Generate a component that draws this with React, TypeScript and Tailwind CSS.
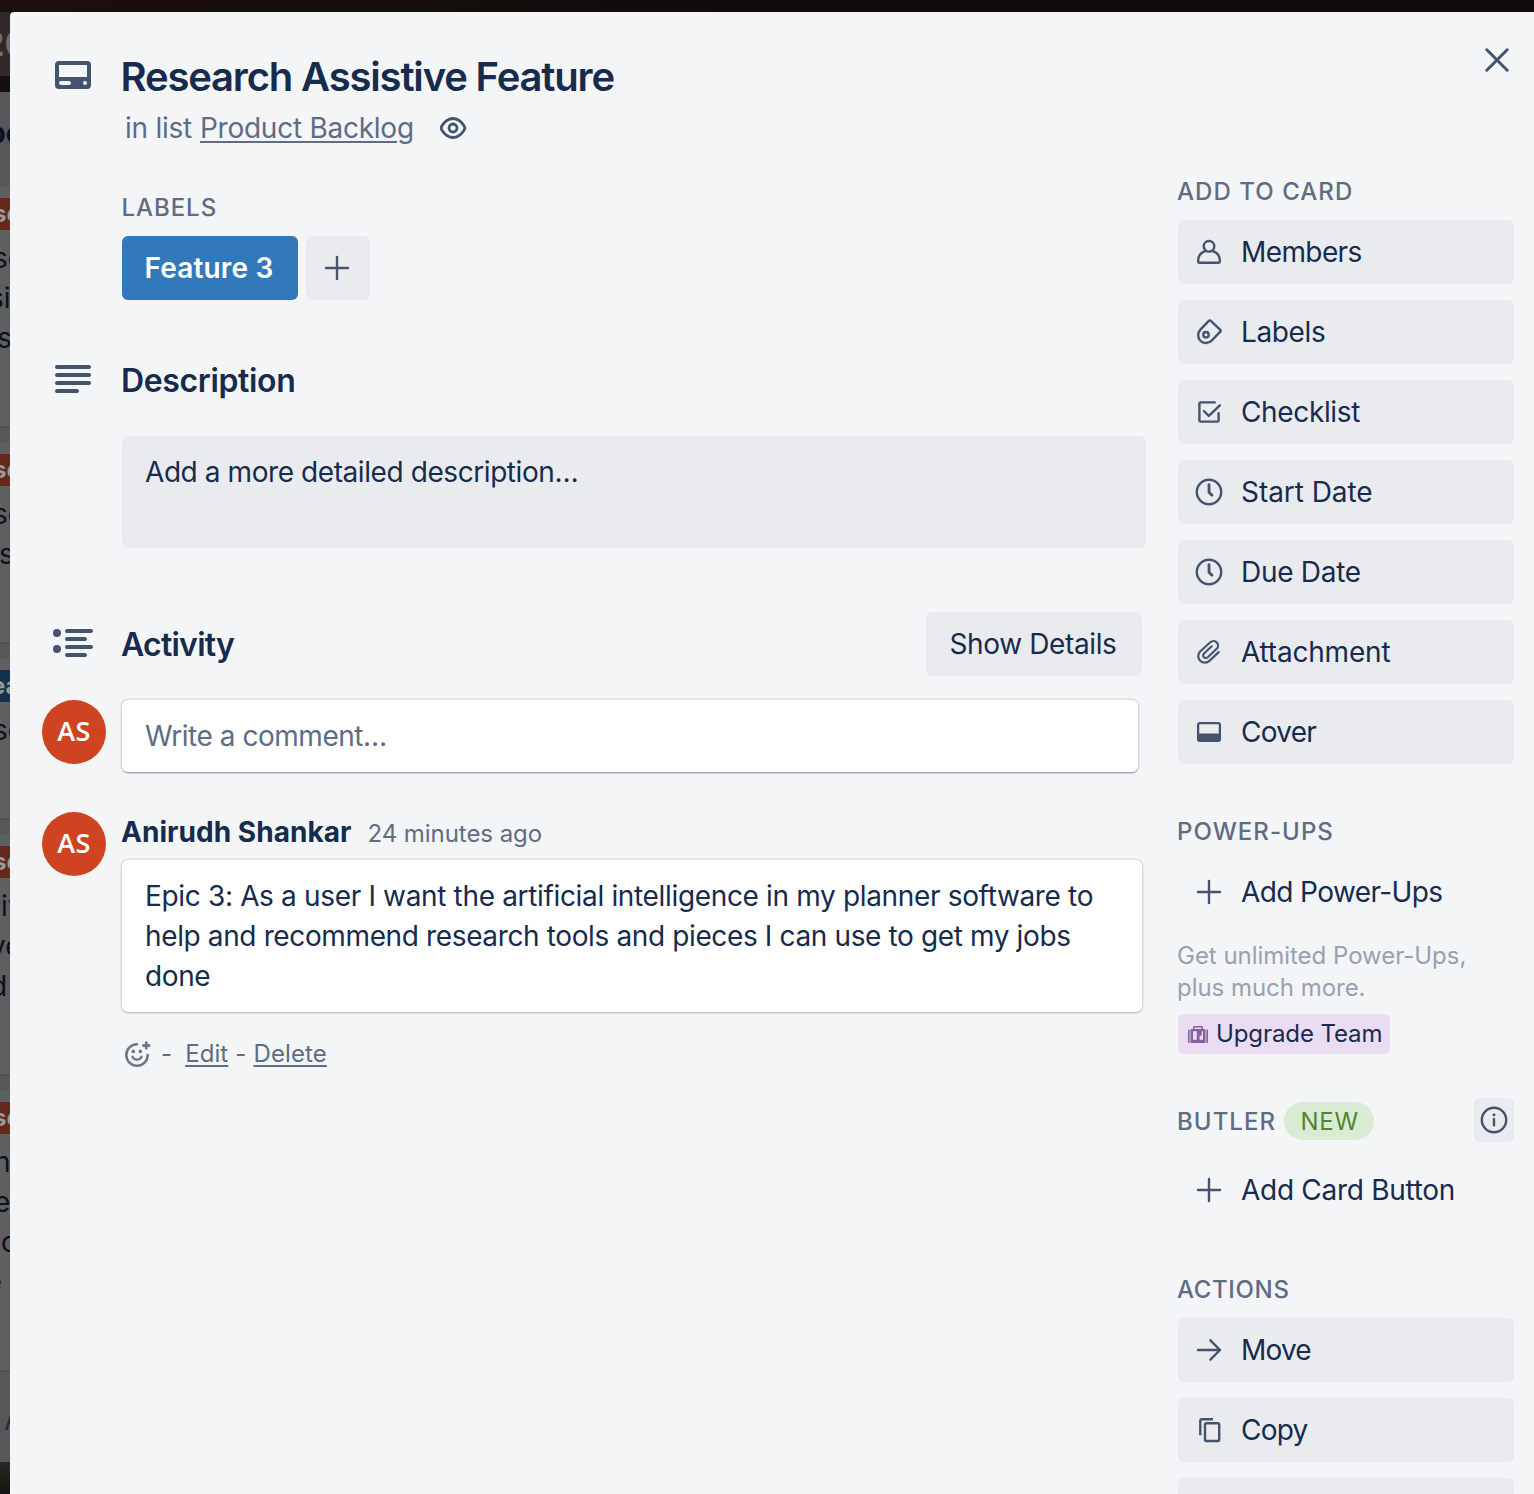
import React from "react";

/* ---------- icons ---------- */

type IconProps = { children: React.ReactNode; className?: string };

function Icon({ children, className = "" }: IconProps) {
  return (
    <svg
      width="32"
      height="32"
      viewBox="0 0 32 32"
      fill="none"
      stroke="currentColor"
      strokeWidth="2.4"
      strokeLinecap="round"
      strokeLinejoin="round"
      className={`shrink-0 text-[#44546f] ${className}`}
    >
      {children}
    </svg>
  );
}

const MemberIcon = () => (
  <Icon>
    <circle cx="16" cy="10.3" r="5.3" />
    <path d="M12.2 15.2C8 16.6 5.1 20.3 5.1 25v.6c0 .6.5 1.1 1.1 1.1h19.6c.6 0 1.1-.5 1.1-1.1V25c0-4.700-2.900-8.400-7.100-9.800" />
  </Icon>
);

const LabelIcon = () => (
  <Icon>
    <path d="M15.8 4.8a1.4 1.4 0 0 1 2 0l9.5 9.1c.5.5.5 1.2 0 1.7L18.9 24.3C15.6 27.6 10.5 27.8 7.6 25 4.4 21.8 4.5 16.5 7.6 13.3Z" />
    <circle cx="13" cy="18.7" r="2.7" />
  </Icon>
);

const ChecklistIcon = () => (
  <Icon>
    <path d="M21.7 6.4H7.6c-.7 0-1.2.5-1.2 1.200v16.800c0 .7.5 1.200 1.200 1.200h16.800c.7 0 1.200-.5 1.200-1.200V17.200" />
    <path d="M11 15.2l4.800 4.600L26.900 9.300" />
  </Icon>
);

const ClockIcon = () => (
  <Icon>
    <circle cx="16" cy="16" r="12.2" />
    <path d="M16 8.600v7.700l3 3" strokeWidth="2.800" />
  </Icon>
);

const AttachmentIcon = () => (
  <Icon>
    <path
      strokeWidth="2.2"
      d="M25.700 16.100l-9 8.500c-2.800 2.700-6.900 2.700-9.500.1-2.700-2.700-2.600-6.700.2-9.400l9.900-9c1.900-1.700 4.800-1.700 6.500.1s1.700 4.600-.1 6.400l-8.900 8.500c-1.100 1-2.900 1.100-3.900 0-1.100-1.100-1-2.700.1-3.800l7.700-7.200"
    />
  </Icon>
);

const CoverIcon = () => (
  <Icon>
    <rect x="5.1" y="7.200" width="21.800" height="17.600" rx="1.800" strokeWidth="2.300" />
    <path d="M4.500 17.400h23v6.300c0 1-.8 1.800-1.800 1.800H6.300c-1 0-1.800-.8-1.800-1.800Z" fill="currentColor" stroke="none" />
  </Icon>
);

const PlusIcon = () => (
  <Icon>
    <path d="M16 5v22M5 16h22" />
  </Icon>
);

const MoveIcon = () => (
  <Icon>
    <path d="M5 16h22M17.400 6.300L27 16l-9.600 9.700" />
  </Icon>
);

const CopyIcon = () => (
  <Icon>
    <path d="M20 5.300H9c-1 0-1.700.7-1.700 1.700v14.200" strokeLinecap="butt" />
    <rect x="12" y="9.200" width="14.200" height="17.800" rx="1.600" />
  </Icon>
);

const InfoIcon = () => (
  <Icon>
    <circle cx="16" cy="16" r="12.200" />
    <path d="M16 15v6.300" />
    <circle cx="16" cy="10.800" r="1.500" fill="currentColor" stroke="none" />
  </Icon>
);

const CardIcon = () => (
  <svg width="36" height="28" viewBox="0 0 36 28" className="mt-[5px] ml-[13px] text-[#44546f]">
    <path
      fill="currentColor"
      fillRule="evenodd"
      d="M4 0h28a4 4 0 0 1 4 4v20a4 4 0 0 1-4 4H4a4 4 0 0 1-4-4V4a4 4 0 0 1 4-4Zm0 4v12h28V4H4Zm2 16a2 2 0 0 0 0 4h8a2 2 0 0 0 0-4H6Zm24 0a2 2 0 1 0 0 4 2 2 0 0 0 0-4Z"
    />
  </svg>
);

const EyeIcon = () => (
  <svg width="28" height="24" viewBox="0 0 28 24" fill="none" stroke="#44546f" strokeWidth="2.800" className="ml-[25px]">
    <path d="M14 2.500c5.200 0 8.800 3.900 10.900 7 1.100 1.600 1.100 3.400 0 5-2.100 3.100-5.700 7-10.900 7s-8.800-3.900-10.900-7c-1.100-1.600-1.100-3.400 0-5 2.100-3.100 5.700-7 10.900-7Z" />
    <circle cx="14" cy="12" r="4" />
  </svg>
);

const CloseIcon = () => (
  <svg width="24" height="24" viewBox="0 0 24 24" fill="none" stroke="#44546f" strokeWidth="3" strokeLinecap="round">
    <path d="M1.800 1.800l20.400 20.400M22.200 1.800L1.800 22.200" />
  </svg>
);

const DescriptionIcon = () => (
  <svg width="36" height="28" viewBox="0 0 36 28" fill="none" stroke="#44546f" strokeWidth="4" strokeLinecap="round" className="mt-1 ml-[13px]">
    <path d="M2 2h32M2 10h32M2 18h32M2 26h20" />
  </svg>
);

const ActivityIcon = () => (
  <svg width="40" height="28" viewBox="0 0 40 28" fill="none" stroke="#44546f" strokeWidth="4" strokeLinecap="round" className="ml-[11px]">
    <path d="M14 2h24M14 10h18M14 18h24M14 26h18" />
    <circle cx="4" cy="4" r="4" fill="#44546f" stroke="none" />
    <circle cx="4" cy="20" r="4" fill="#44546f" stroke="none" />
  </svg>
);

const EmojiIcon = () => (
  <svg width="28" height="28" viewBox="0 0 28 28" fill="none" stroke="#6b778c" strokeWidth="2.500" strokeLinecap="round" className="shrink-0">
    <path d="M14 4.300A10.700 10.700 0 1 0 24.700 15" />
    <path d="M9.500 16.700c.7 1.900 2.400 3 4.500 3s3.800-1.100 4.500-3" strokeWidth="2.300" />
    <circle cx="10.300" cy="11.400" r="1.800" fill="#6b778c" stroke="none" />
    <circle cx="17.300" cy="11.400" r="1.800" fill="#6b778c" stroke="none" />
    <path d="M23.300 2.700v5.600M20.500 5.500h5.600" strokeWidth="2.800" />
  </svg>
);

const BriefcaseIcon = () => (
  <svg width="20" height="17" viewBox="0 0 20 17" fill="#89609e" className="shrink-0">
    <rect x="0" y="3.500" width="1.600" height="13.500" rx=".6" />
    <rect x="18.400" y="3.500" width="1.600" height="13.500" rx=".6" />
    <path
      fillRule="evenodd"
      d="M5 3V1.600C5 .7 5.700 0 6.600 0h6.800c.9 0 1.600.7 1.600 1.600V3h1.500c.6 0 1 .4 1 1v12c0 .6-.4 1-1 1h-13c-.6 0-1-.4-1-1V4c0-.6.400-1 1-1H5Zm1.500 0h7V1.600h-7V3ZM5 5.200v8.600h3.800V5.200H5Zm6.600 4.600v4H15V5.200h-1.300v4.600h-2.100Z"
    />
  </svg>
);

/* ---------- board behind the dialog ---------- */

type Line = { text: string; className: string };

function BoardCard({ height, color, label, lines }: { height: string; color: string; label: string; lines: Line[] }) {
  return (
    <div className={`shrink-0 overflow-hidden border-b-2 border-[#4e4f54] bg-[#5f5f5f] pt-3 ${height}`}>
      <div className={`h-8 text-2xl leading-8 font-bold text-[#9a9a9a] ${color}`}>{label}</div>
      <div className="mt-2 text-[28px] leading-[40px] text-[#0a1120]">
        {lines.map((line, i) => (
          <div key={i} className={line.className}>
            {line.text}
          </div>
        ))}
      </div>
    </div>
  );
}

function Board() {
  return (
    <div className="flex w-[10px] shrink-0 flex-col overflow-hidden whitespace-nowrap">
      <div className="h-16 shrink-0 bg-[#2f2a28] indent-[-17px] text-[34px] leading-[63px] font-bold text-[#6f6c6a]">20</div>
      <div className="h-4 shrink-0 bg-[#140e0c]" />
      <div className="h-[94px] shrink-0 bg-[#57575a] indent-[-12px] text-[28px] leading-[82px] font-bold text-[#0a1120]">po</div>
      <div className="flex shrink-0 flex-col gap-[14px] bg-[#57575a]">
        <BoardCard
          height="h-[242px]"
          color="bg-[#64291d] indent-[-7px]"
          label="se"
          lines={[
            { text: "se", className: "indent-[-7px]" },
            { text: "si", className: "indent-[-11px]" },
            { text: "s", className: "indent-[-3px]" },
          ]}
        />
        <BoardCard
          height="h-[202px]"
          color="bg-[#64291d] indent-[-7px]"
          label="se"
          lines={[
            { text: "se", className: "indent-[-7px]" },
            { text: "s", className: "indent-[-1px]" },
          ]}
        />
        <BoardCard
          height="h-[162px]"
          color="bg-[#14304a] indent-[-9px]"
          label="ea"
          lines={[{ text: "se", className: "indent-[-7px]" }]}
        />
        <BoardCard
          height="h-[242px]"
          color="bg-[#64291d] indent-[-7px]"
          label="se"
          lines={[
            { text: "iv", className: "indent-[1px]" },
            { text: "ve", className: "indent-[-10px]" },
            { text: "d", className: "indent-[-10px]" },
          ]}
        />
        <BoardCard
          height="h-[282px]"
          color="bg-[#64291d] indent-[-7px]"
          label="se"
          lines={[
            { text: "n", className: "indent-[-6px]" },
            { text: "e", className: "indent-[-6px]" },
            { text: "c", className: "indent-[1px]" },
            { text: "e", className: "indent-[-12px] text-2xl leading-[40px] text-[#262b38]" },
          ]}
        />
      </div>
      <div className="h-[90px] shrink-0 bg-[#57575a] indent-[4px] text-[28px] leading-[96px] text-[#252b36]">A</div>
      <div className="flex-1 bg-gradient-to-b from-[#2c2924] to-[#15120f]" />
    </div>
  );
}

/* ---------- dialog pieces ---------- */

function Avatar() {
  return (
    <div className="flex size-16 shrink-0 items-center justify-center rounded-full bg-[#cf4323] pb-1 font-['Open_Sans',sans-serif] text-[27px] leading-none font-semibold tracking-[0.5px] text-white">
      AS
    </div>
  );
}

function SideHeading({ children, className = "" }: { children: React.ReactNode; className?: string }) {
  return (
    <h3 className={`h-6 shrink-0 text-2xl leading-6 font-medium whitespace-nowrap text-[#5e6c84] ${className}`}>
      {children}
    </h3>
  );
}

function SideButton({ icon, label, plain = false, tracking = "tracking-[-0.36px]" }: { icon: React.ReactNode; label: string; plain?: boolean; tracking?: string }) {
  return (
    <button
      className={`flex h-16 w-full shrink-0 items-center gap-4 rounded-md pl-[15px] text-left text-[28px] whitespace-nowrap text-[#172b4d] ${tracking} ${plain ? "" : "bg-[#eaebef]"}`}
    >
      {icon}
      <span>{label}</span>
    </button>
  );
}

function Main() {
  return (
    <main className="flex w-[1104px] shrink-0 flex-col pt-11">
      <header className="flex gap-4">
        <div className="w-16 shrink-0">
          <CardIcon />
        </div>
        <div>
          <h1 className="-ml-[1.5px] text-[40px] leading-[41px] font-semibold tracking-[-1.17px] whitespace-nowrap">Research Assistive Feature</h1>
          <div className="mt-[15px] ml-[3px] flex h-8 items-center text-[28px] leading-8 tracking-[-0.25px] whitespace-nowrap text-[#5e6c84]">
            <span>in list</span>
            <a className="ml-2 underline decoration-2 underline-offset-[3px]">Product Backlog</a>
            <EyeIcon />
          </div>
        </div>
      </header>

      <section className="mt-[52px] ml-20">
        <SideHeading className="-ml-[0.5px] tracking-[0.95px]">LABELS</SideHeading>
        <div className="mt-4 flex gap-2">
          <div className="flex h-16 w-44 items-center rounded-md bg-[#3279bb] pl-[22.5px] text-[28px] font-semibold tracking-[0.17px] whitespace-nowrap text-white">
            Feature 3
          </div>
          <button className="flex size-16 items-center justify-center rounded-md bg-[#eaebef] pr-[2px]">
            <PlusIcon />
          </button>
        </div>
      </section>

      <section className="mt-[61px]">
        <div className="flex h-10 gap-4">
          <div className="w-16 shrink-0">
            <DescriptionIcon />
          </div>
          <h2 className="-ml-px text-[32px] leading-[40px] font-semibold tracking-[-0.36px]">Description</h2>
        </div>
        <div className="mt-[35px] ml-20 h-28 rounded-md bg-[#eaebef] px-[23px] py-4 text-[28px] leading-[40px] tracking-[-0.42px]">
          Add a more detailed description…
        </div>
      </section>

      <section className="mt-16">
        <div className="flex h-16 items-center gap-4 pr-1">
          <div className="w-16 shrink-0 pb-[2px]">
            <ActivityIcon />
          </div>
          <h2 className="-ml-px flex-1 pt-0.5 text-[32px] leading-[40px] font-semibold tracking-[-0.75px]">Activity</h2>
          <button className="h-16 w-[216px] rounded-md bg-[#eaebef] pr-[2px] text-[28px] tracking-[-0.38px]">Show Details</button>
        </div>

        <div className="mt-6 flex gap-4 pr-2">
          <Avatar />
          <div className="h-[72px] flex-1 rounded-md bg-white px-[23px] text-[28px] leading-[72px] tracking-[-0.46px] text-[#5e6c84] shadow-[0_2px_2px_-1px_rgba(9,30,66,0.4),0_0_0_1.5px_rgba(9,30,66,0.1)]">
            Write a comment…
          </div>
        </div>

        <div className="mt-10 flex gap-4 pr-1">
          <Avatar />
          <div className="flex-1">
            <div className="-ml-px flex h-10 items-baseline leading-[40px] whitespace-nowrap">
              <span className="text-[28px] font-bold tracking-[0.04px]">Anirudh Shankar</span>
              <span className="ml-4 text-2xl leading-[40px] tracking-[-0.05px] text-[#5e6c84]">24 minutes ago</span>
            </div>
            <div className="mt-2 rounded-md bg-white py-4 pl-[23px] text-[28px] leading-[40px] whitespace-nowrap shadow-[0_2px_2px_-1px_rgba(9,30,66,0.18),0_0_0_1.5px_rgba(9,30,66,0.1)]">
              <div className="tracking-[-0.34px]">Epic 3: As a user I want the artificial intelligence in my planner software to</div>
              <div className="tracking-[-0.37px]">help and recommend research tools and pieces I can use to get my jobs</div>
              <div className="tracking-[-0.4px]">done</div>
            </div>
            <div className="mt-[26px] ml-px flex h-8 items-center text-2xl tracking-[0.1px] whitespace-nowrap text-[#5e6c84]">
              <EmojiIcon />
              <span className="ml-[10px]">-</span>
              <a className="ml-[13px] underline decoration-2 underline-offset-[3px]">Edit</a>
              <span className="mx-[7px]">-</span>
              <a className="underline decoration-2 underline-offset-[3px]">Delete</a>
            </div>
          </div>
        </div>
      </section>
    </main>
  );
}

function Sidebar() {
  return (
    <aside className="flex w-[336px] shrink-0 flex-col pt-[168px]">
      <SideHeading className="-ml-px tracking-[1.05px]">ADD TO CARD</SideHeading>
      <div className="mt-4 flex flex-col gap-4">
        <SideButton icon={<MemberIcon />} label="Members" tracking="tracking-[-0.6px]" />
        <SideButton icon={<LabelIcon />} label="Labels" tracking="tracking-[-0.36px]" />
        <SideButton icon={<ChecklistIcon />} label="Checklist" />
        <SideButton icon={<ClockIcon />} label="Start Date" tracking="tracking-[-0.05px]" />
        <SideButton icon={<ClockIcon />} label="Due Date" tracking="tracking-[-0.28px]" />
        <SideButton icon={<AttachmentIcon />} label="Attachment" tracking="tracking-[-0.2px]" />
        <SideButton icon={<CoverIcon />} label="Cover" tracking="tracking-[-0.75px]" />
      </div>

      <SideHeading className="-ml-px mt-14 tracking-[1.05px]">POWER-UPS</SideHeading>
      <div className="mt-4">
        <SideButton plain icon={<PlusIcon />} label="Add Power-Ups" tracking="tracking-[-0.6px]" />
      </div>
      <p className="mt-4 -ml-px shrink-0 text-2xl leading-8 tracking-[-0.03px] whitespace-nowrap text-[#98a1b0]">
        Get unlimited Power-Ups,
        <br />
        plus much more.
      </p>
      <button className="mt-[10px] flex h-10 w-[212px] shrink-0 items-center gap-2 rounded-md bg-[#eadcf3] pl-[10px] text-2xl tracking-[-0.1px] whitespace-nowrap text-[#172b4d]">
        <BriefcaseIcon />
        Upgrade Team
      </button>

      <div className="mt-11 flex h-11 shrink-0 items-center">
        <SideHeading className="-ml-px mt-[3px] tracking-[1.05px]">BUTLER</SideHeading>
        <span className="mt-[2px] ml-[8px] flex h-[38px] w-[90px] items-center justify-center rounded-full bg-[#d9ecd3] pt-px pl-px text-2xl tracking-[0.75px] text-[#4f8632]">
          NEW
        </span>
        <button className="ml-auto flex h-11 w-10 items-center justify-center rounded-md bg-[#eaebef]">
          <InfoIcon />
        </button>
      </div>
      <div className="mt-4">
        <SideButton plain icon={<PlusIcon />} label="Add Card Button" tracking="tracking-[-0.28px]" />
      </div>

      <SideHeading className="-ml-px mt-14 tracking-[0.65px]">ACTIONS</SideHeading>
      <div className="mt-4 flex flex-col gap-4">
        <SideButton icon={<MoveIcon />} label="Move" tracking="tracking-[-0.8px]" />
        <SideButton icon={<CopyIcon />} label="Copy" tracking="tracking-[-0.8px]" />
        <div className="h-16 shrink-0 rounded-md bg-[#eaebef]" />
      </div>
    </aside>
  );
}

export default function App() {
  return (
    <div className="flex h-[1494px] w-[1534px] flex-col overflow-hidden bg-[#100c0b] font-['Inter','Liberation_Sans',sans-serif]">
      <div className="h-3 shrink-0 bg-gradient-to-r from-[#1a0f0d] via-[#0f0c0b] to-[#110c0b]" />
      <div className="flex min-h-0 flex-1">
        <Board />
        <div className="relative flex flex-1 gap-8 overflow-hidden rounded-tl-[4px] bg-[#f4f5f7] pl-8 text-[#172b4d]">
          <Main />
          <Sidebar />
          <button className="absolute top-9 right-[25px]" aria-label="Close">
            <CloseIcon />
          </button>
        </div>
      </div>
    </div>
  );
}
